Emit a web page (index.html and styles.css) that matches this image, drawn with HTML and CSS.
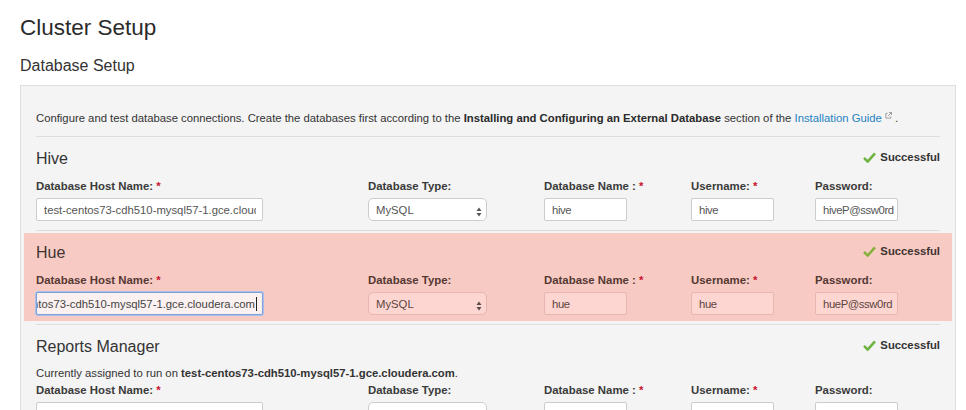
FILE: index.html
```html
<!DOCTYPE html>
<html lang="en">
<head>
    <meta charset="UTF-8">
    <title>Cluster Setup</title>
    <link rel="stylesheet" href="styles.css">
</head>
<body>

    <div class="page">
        <h1 class="page-title">Cluster Setup</h1>
        <h2 class="step-title">Database Setup</h2>

        <div class="panel">
            <p class="intro">Configure and test database connections. Create the databases first according to the <b>Installing and Configuring an External Database</b> section of the <a href="#" class="ext-link">Installation Guide<svg class="ext-icon" viewBox="0 0 8 8" width="7" height="7"><path d="M3 1.5H1V7h5.5V5" fill="none" stroke="#888" stroke-width="0.9"/><path d="M4.5 0.5h3v3M7.5 0.5 3.5 4.5" fill="none" stroke="#888" stroke-width="0.9"/></svg></a> .</p>
            <div class="sep"></div>

            <!-- Hive -->
            <section class="db">
                <div class="db-head">
                    <h3>Hive</h3>
                    <span class="status"><svg class="check" viewBox="0 0 14 12" width="13" height="11"><path d="M1 6.5 5 10.5 13 1.5" fill="none" stroke="currentColor" stroke-width="2.8" stroke-linejoin="round"/></svg>Successful</span>
                </div>
                <div class="db-grid">
                    <div class="cell">
                        <label>Database Host Name: <span class="req">*</span></label>
                        <input class="field host" type="text" value="test-centos73-cdh510-mysql57-1.gce.cloudera.com">
                    </div>
                    <div class="cell">
                        <label>Database Type:</label>
                        <div class="select-wrap">
                            <select class="field select"><option>MySQL</option></select>
                            <svg class="arrows" viewBox="0 0 6 10" width="6" height="10"><path d="M3 0.5 5.5 4H0.5zM3 9.5 5.5 6H0.5z" fill="#555"/></svg>
                        </div>
                    </div>
                    <div class="cell">
                        <label>Database Name : <span class="req">*</span></label>
                        <input class="field small" type="text" value="hive">
                    </div>
                    <div class="cell">
                        <label>Username: <span class="req">*</span></label>
                        <input class="field small" type="text" value="hive">
                    </div>
                    <div class="cell">
                        <label>Password:</label>
                        <input class="field small" type="text" value="hiveP@ssw0rd">
                    </div>
                </div>
            </section>
            <div class="sep"></div>

            <!-- Hue (highlighted) -->
            <section class="db db-error">
                <div class="db-head">
                    <h3>Hue</h3>
                    <span class="status"><svg class="check" viewBox="0 0 14 12" width="13" height="11"><path d="M1 6.5 5 10.5 13 1.5" fill="none" stroke="currentColor" stroke-width="2.8" stroke-linejoin="round"/></svg>Successful</span>
                </div>
                <div class="db-grid">
                    <div class="cell">
                        <label>Database Host Name: <span class="req">*</span></label>
                        <div class="field host focused"><span>test-centos73-cdh510-mysql57-1.gce.cloudera.com<i class="caret"></i></span></div>
                    </div>
                    <div class="cell">
                        <label>Database Type:</label>
                        <div class="select-wrap">
                            <select class="field select"><option>MySQL</option></select>
                            <svg class="arrows" viewBox="0 0 6 10" width="6" height="10"><path d="M3 0.5 5.5 4H0.5zM3 9.5 5.5 6H0.5z" fill="#5a4a48"/></svg>
                        </div>
                    </div>
                    <div class="cell">
                        <label>Database Name : <span class="req">*</span></label>
                        <input class="field small" type="text" value="hue">
                    </div>
                    <div class="cell">
                        <label>Username: <span class="req">*</span></label>
                        <input class="field small" type="text" value="hue">
                    </div>
                    <div class="cell">
                        <label>Password:</label>
                        <input class="field small" type="text" value="hueP@ssw0rd">
                    </div>
                </div>
            </section>
            <div class="sep"></div>

            <!-- Reports Manager -->
            <section class="db">
                <div class="db-head">
                    <h3>Reports Manager</h3>
                    <span class="status"><svg class="check" viewBox="0 0 14 12" width="13" height="11"><path d="M1 6.5 5 10.5 13 1.5" fill="none" stroke="currentColor" stroke-width="2.8" stroke-linejoin="round"/></svg>Successful</span>
                </div>
                <p class="note">Currently assigned to run on <b>test-centos73-cdh510-mysql57-1.gce.cloudera.com</b>.</p>
                <div class="db-grid tight">
                    <div class="cell">
                        <label>Database Host Name: <span class="req">*</span></label>
                        <input class="field host" type="text" value="">
                    </div>
                    <div class="cell">
                        <label>Database Type:</label>
                        <div class="select-wrap">
                            <select class="field select"><option></option></select>
                        </div>
                    </div>
                    <div class="cell">
                        <label>Database Name : <span class="req">*</span></label>
                        <input class="field small" type="text" value="">
                    </div>
                    <div class="cell">
                        <label>Username: <span class="req">*</span></label>
                        <input class="field small" type="text" value="">
                    </div>
                    <div class="cell">
                        <label>Password:</label>
                        <input class="field small" type="text" value="">
                    </div>
                </div>
            </section>
        </div>
    </div>

</body>
</html>
```

FILE: styles.css
```css
body {
    margin: 0;
    padding: 0;
    background-color: #ffffff;
    font-family: "Liberation Sans", Arial, sans-serif;
    color: #333333;
    overflow: hidden;
}
.page {
    padding: 0 10px 0 20px;
}
.page-title {
    margin: 14px 0 0;
    font-size: 22.5px;
    line-height: 28px;
    font-weight: normal;
    color: #2b2b2b;
}
.step-title {
    margin: 14px 0 0;
    font-size: 16px;
    line-height: 20px;
    font-weight: normal;
    color: #333333;
}
.panel {
    margin-top: 9px;
    background-color: #f4f4f4;
    border: 1px solid #dddddd;
    padding: 24px 15px 40px;
}
.intro {
    margin: 0;
    font-size: 11.3px;
    line-height: 17px;
    color: #333333;
}
.intro b {
    color: #2a2a2a;
}
.ext-link {
    color: #1f82c0;
    text-decoration: none;
}
.ext-icon {
    margin-left: 3px;
    vertical-align: 3px;
}
.sep {
    height: 1px;
    background-color: #dddddd;
    margin: 3px 0 2px;
}
.intro + .sep {
    margin-top: 9px;
}
.db {
    margin: 0 -12px;
    padding: 10px 12px 6px;
}
.db-head {
    display: flex;
    justify-content: space-between;
    align-items: flex-start;
}
.db-head h3 {
    margin: 0;
    font-size: 16px;
    line-height: 20px;
    font-weight: normal;
    color: #333333;
}
.status {
    display: flex;
    align-items: center;
    gap: 4px;
    font-size: 11.3px;
    line-height: 16px;
    font-weight: bold;
    color: #333333;
}
.check {
    color: #6db33f;
}
.db-grid {
    display: grid;
    grid-template-columns: 332px 176px 147px 124px 124px;
    margin-top: 9px;
}
.db-grid.tight {
    margin-top: 0;
}
.note {
    margin: 8px 0 0;
    font-size: 11.3px;
    line-height: 17px;
    color: #333333;
}
label {
    display: block;
    font-size: 11.4px;
    line-height: 17px;
    font-weight: bold;
    color: #3a3a3a;
}
.req {
    color: #c8102e;
}
.field {
    display: block;
    box-sizing: border-box;
    height: 23px;
    margin: 3px 0 0;
    padding: 0 6px 0 7px;
    border: 1px solid #cccccc;
    border-radius: 2px;
    background-color: #ffffff;
    font-family: "Liberation Sans", Arial, sans-serif;
    font-size: 11.3px;
    color: #555555;
    outline: none;
}
.host {
    width: 227px;
}
.small {
    width: 83px;
    padding-right: 1px;
    letter-spacing: -0.4px;
}
.select-wrap {
    position: relative;
    width: 119px;
}
.select {
    width: 119px;
    border-radius: 5px;
    appearance: none;
    -webkit-appearance: none;
}
.arrows {
    position: absolute;
    right: 5px;
    top: 9px;
}

/* highlighted row */
.db-error {
    background-color: #f7cbc4;
}
.db-error h3,
.db-error .status {
    color: #3f3331;
}
.db-error .check {
    color: #86b23c;
}
.db-error label {
    color: #553833;
}
.db-error .field {
    background-color: #fdd6d1;
    border-color: #e7b6ae;
    color: #5e4541;
}
.db-error .field.focused {
    display: flex;
    justify-content: flex-end;
    align-items: center;
    overflow: hidden;
    white-space: nowrap;
    padding: 0 5px 0 0;
    background-color: #fbf1f0;
    border: 1px solid #7f9fd9;
    box-shadow: 0 0 0 1px #a9c0ea;
    color: #444444;
}
.caret {
    display: inline-block;
    width: 1px;
    height: 14px;
    margin-left: 1px;
    vertical-align: -3px;
    background-color: #222222;
}
```
